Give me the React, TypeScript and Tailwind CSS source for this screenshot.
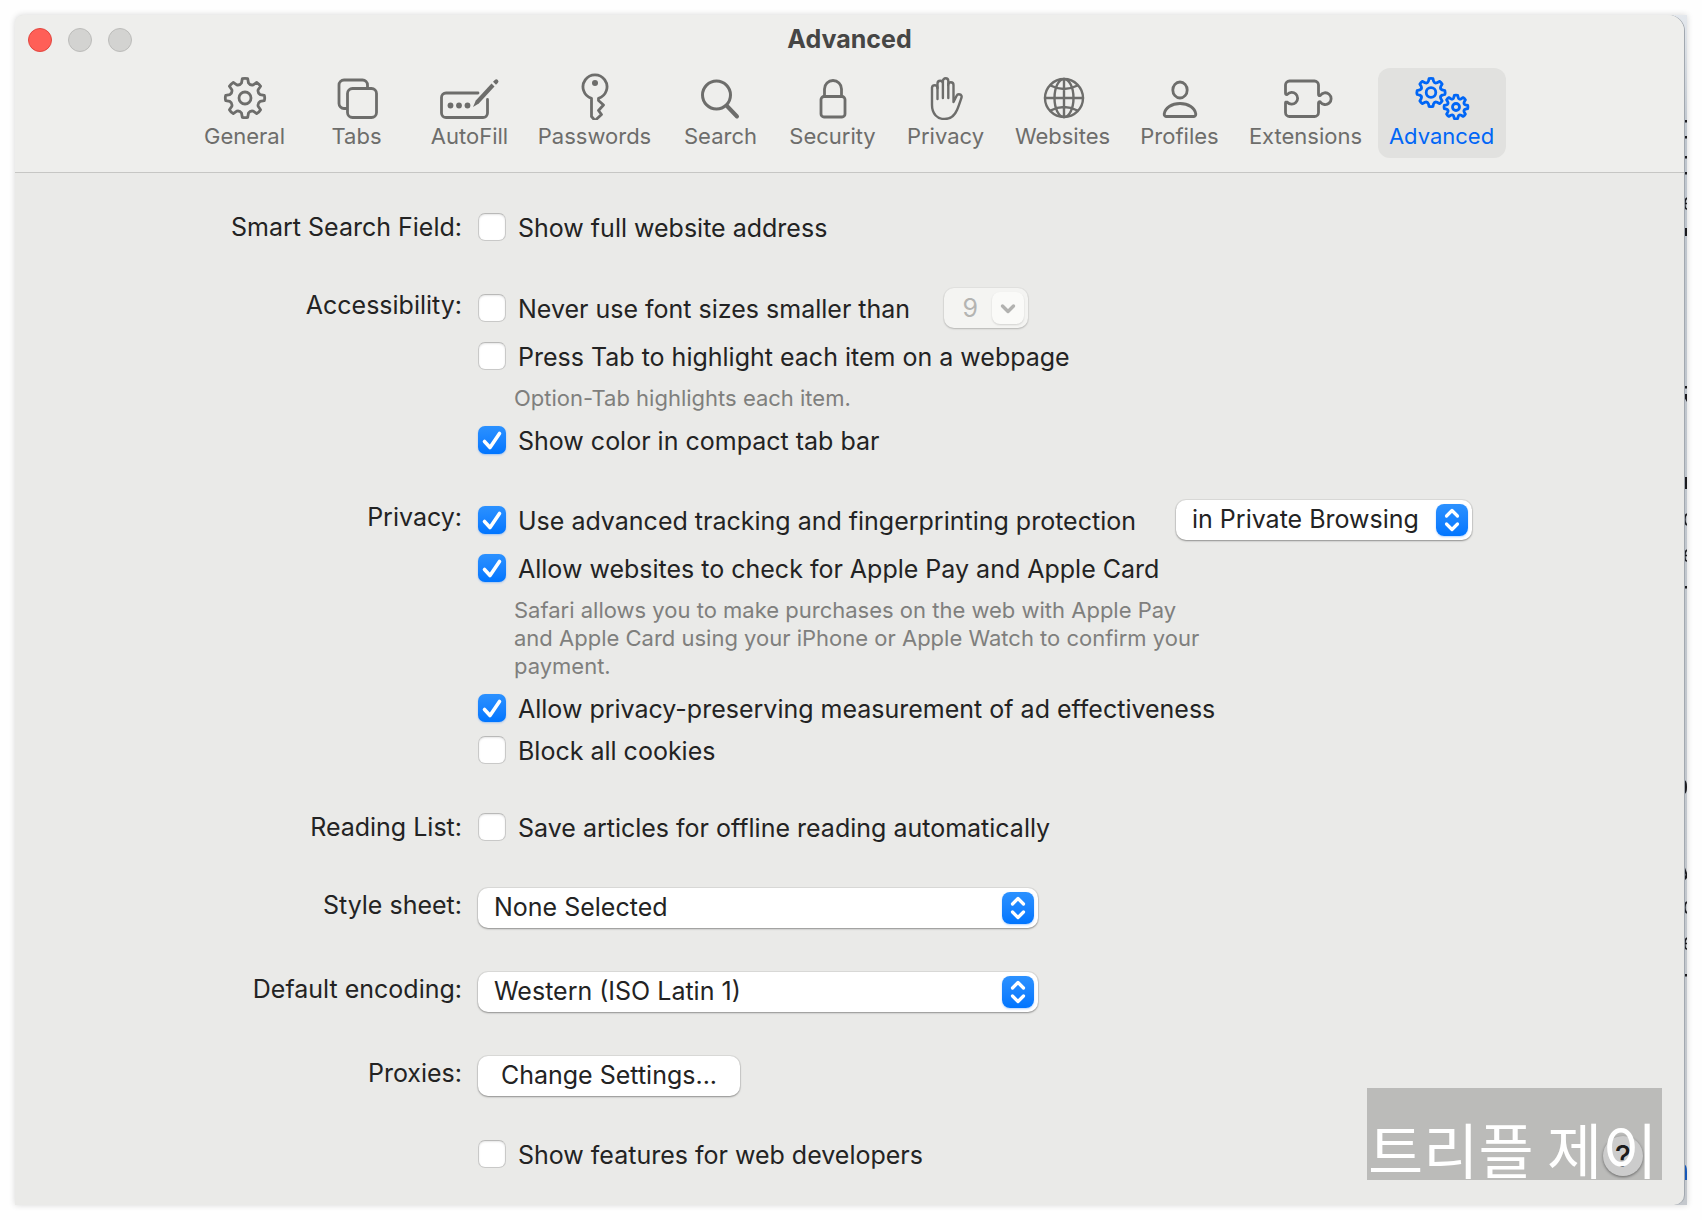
import React from "react";

type IconProps = { children: React.ReactNode; w?: number; h?: number };

function Icon({ children, w = 56, h = 52 }: IconProps) {
  return (
    <svg
      width={w}
      height={h}
      viewBox={`0 0 ${w} ${h}`}
      fill="none"
      stroke="currentColor"
      strokeWidth={2.8}
      strokeLinecap="round"
      strokeLinejoin="round"
      aria-hidden="true"
    >
      {children}
    </svg>
  );
}

/* Outline of an eight-toothed gear centred on (cx, cy). */
function gearPath(cx: number, cy: number, outer: number, inner: number) {
  const points: string[] = [];
  const at = (deg: number, r: number) => {
    const a = ((deg - 90) * Math.PI) / 180;
    return `${(cx + r * Math.cos(a)).toFixed(2)} ${(cy + r * Math.sin(a)).toFixed(2)}`;
  };
  for (let i = 0; i < 8; i++) {
    const d = i * 45;
    points.push(`${i === 0 ? "M" : "L"}${at(d - 8, outer)}`);
    points.push(`Q${at(d, outer * 1.03)} ${at(d + 8, outer)}`);
    points.push(`L${at(d + 13, inner + 1)}`);
    points.push(`Q${at(d + 22.5, inner - 1)} ${at(d + 32, inner + 1)}`);
  }
  return points.join(" ") + "Z";
}

const icons = {
  general: (
    <Icon>
      <path d={gearPath(28, 30, 19.5, 14.5)} />
      <circle cx="28" cy="30" r="6" />
    </Icon>
  ),
  tabs: (
    <Icon>
      <path d="M17.500 40.500h-2.500a5 5 0 0 1-5-5V17a5 5 0 0 1 5-5h18.500a5 5 0 0 1 5 5v2.500" />
      <rect x="18.500" y="20.500" width="29" height="29" rx="5" />
    </Icon>
  ),
  autofill: (
    <Icon w={62}>
      <path d="M39 25H7a4.500 4.500 0 0 0-4.500 4.500v15.500a4.500 4.500 0 0 0 4.500 4.500h37a4.500 4.500 0 0 0 4.500-4.500V31.500" />
      <g fill="currentColor" stroke="none">
        <circle cx="11.500" cy="37.500" r="2.900" />
        <circle cx="20" cy="37.500" r="2.900" />
        <circle cx="28.500" cy="37.500" r="2.900" />
        <path d="M34 39l2.800-6.500 15.700-17 3 3-15.700 17z" />
        <path d="M54 13.800l1.800-1.800a2.100 2.100 0 0 1 3 3l-1.800 1.800z" />
      </g>
    </Icon>
  ),
  passwords: (
    <Icon>
      <path d="M24.500 30.300A12 12 0 1 1 31.500 30.300V32.500l5 4.500-5 5.500 3 4-6.500 6-3.500-4z" />
      <circle cx="28" cy="15" r="3" fill="currentColor" stroke="none" />
    </Icon>
  ),
  search: (
    <Icon>
      <circle cx="23.500" cy="27" r="14" strokeWidth={3} />
      <path d="M34 38l10 10.500" strokeWidth={4} />
    </Icon>
  ),
  security: (
    <Icon>
      <rect x="16" y="28.500" width="24" height="20.500" rx="3" />
      <path d="M19.500 28.500v-7.500a8.500 8.500 0 0 1 17 0v7.500" />
    </Icon>
  ),
  privacy: (
    <Icon>
      <g strokeWidth={2.4}>
        <path d="M19.500 31V19.500a2.800 2.800 0 0 0-5.500 0V37c0 8.500 5 14 12.500 14 6.500 0 10-3 12.500-9 1.700-4 3-8 4.500-12.500 1-3-3.500-4.500-5-1.500L35.500 34V17a2.700 2.700 0 0 0-5.400 0" />
        <path d="M19.500 20v-4.500a2.700 2.700 0 0 1 5.400 0V30M24.900 15v-2a2.700 2.700 0 0 1 5.400 0v17" />
      </g>
    </Icon>
  ),
  websites: (
    <Icon>
      <g strokeWidth={2.4}>
        <circle cx="29" cy="30" r="19" />
        <ellipse cx="29" cy="30" rx="9.500" ry="19" />
        <path d="M10 30h38M29 11v38M15.500 17.500q13.500 7 27 0M15.500 42.500q13.500-7 27 0" />
      </g>
    </Icon>
  ),
  profiles: (
    <Icon>
      <ellipse cx="28" cy="22" rx="7.200" ry="8" />
      <path d="M14.500 48.500h27a2.300 2.300 0 0 0 2.300-2.500C43 40 36.500 35.500 28 35.500S13 40 12.200 46A2.300 2.300 0 0 0 14.500 48.500z" />
    </Icon>
  ),
  extensions: (
    <Icon>
      <path d="M7.500 25V17a4 4 0 0 1 4-4h25a4 4 0 0 1 4 4v9.200q0 2 1.800 1.200a5.900 5.900 0 1 1 0 6.500q-1.800-.8-1.800 1.200v9.400a4 4 0 0 1-4 4h-25a4 4 0 0 1-4-4v-9.400q0-1.500 1.800-.9a5.900 5.900 0 1 0 0-7.800q-1.800.600-1.800-1.400z" />
    </Icon>
  ),
  advanced: (
    <Icon>
      <path d={gearPath(17, 24.5, 14, 10.5)} />
      <circle cx="17" cy="24.500" r="4.800" />
      <path d={gearPath(42, 39, 11.8, 8.8)} />
      <circle cx="42" cy="39" r="3.500" />
    </Icon>
  ),
};

const tabs = [
  { label: "General", icon: icons.general, width: "w-[102px]" },
  { label: "Tabs", icon: icons.tabs, width: "w-[114px]" },
  { label: "AutoFill", icon: icons.autofill, width: "w-[104px]" },
  { label: "Passwords", icon: icons.passwords, width: "w-[138px]" },
  { label: "Search", icon: icons.search, width: "w-[106px]" },
  { label: "Security", icon: icons.security, width: "w-[110px]" },
  { label: "Privacy", icon: icons.privacy, width: "w-[108px]" },
  { label: "Websites", icon: icons.websites, width: "w-[118px]" },
  { label: "Profiles", icon: icons.profiles, width: "w-[108px]" },
  { label: "Extensions", icon: icons.extensions, width: "w-[136px]" },
  { label: "Advanced", icon: icons.advanced, width: "w-[128px]", active: true },
];

function Check({ label, checked = false, width = "" }: { label: string; checked?: boolean; width?: string }) {
  return (
    <label className={`flex h-7 items-center gap-3 whitespace-nowrap ${width}`}>
      <span className="relative block size-7 shrink-0">
        <input
          type="checkbox"
          defaultChecked={checked}
          className="peer block size-7 appearance-none rounded-[7px] border border-[#c9c9c8] border-t-[#b9b9b8] bg-white shadow-[inset_0_1px_2px_rgba(0,0,0,0.1)] checked:border-0 checked:bg-linear-to-b checked:from-[#2b91ff] checked:to-[#0075ff] checked:shadow-[0_1px_2px_rgba(0,110,255,0.3)]"
        />
        <svg
          viewBox="0 0 28 28"
          className="pointer-events-none absolute inset-0 hidden size-7 peer-checked:block"
          fill="none"
          stroke="white"
          strokeWidth={3.6}
          strokeLinecap="round"
          strokeLinejoin="round"
          aria-hidden="true"
        >
          <path d="M6.500 15.500l5.500 6L21.500 7.500" />
        </svg>
      </span>
      <span className="pt-[2px] leading-[28px]">{label}</span>
    </label>
  );
}

function PopUp({ id, label, value, width }: { id?: string; label?: string; value: string; width: string }) {
  return (
    <div className={`relative h-10 shrink-0 ${width}`}>
      <select
        id={id}
        aria-label={label}
        className="block h-10 w-full appearance-none rounded-[10px] bg-white pr-10 pl-4 shadow-[0_0_0_1px_rgba(0,0,0,0.06),0_1px_2px_rgba(0,0,0,0.35)]"
      >
        <option>{value}</option>
      </select>
      <span className="pointer-events-none absolute top-1 right-1 size-8 rounded-lg bg-linear-to-b from-[#2b91ff] to-[#0075ff] shadow-[0_1px_2px_rgba(0,110,255,0.3)]">
        <svg
          viewBox="0 0 32 32"
          fill="none"
          stroke="white"
          strokeWidth={3.2}
          strokeLinecap="round"
          strokeLinejoin="round"
          aria-hidden="true"
        >
          <path d="M10.500 12L16 6.500l5.500 5.500M10.500 20l5.500 5.500 5.500-5.500" />
        </svg>
      </span>
    </div>
  );
}

function Hint({ children }: { children: React.ReactNode }) {
  return <p className="max-w-[732px] pl-9 text-[22px] leading-[28px] text-[#7f7f7d]">{children}</p>;
}

type RowProps = { label?: string; htmlFor?: string; className?: string; children: React.ReactNode };

function Row({ label, htmlFor, className = "", children }: RowProps) {
  return (
    <div className={`grid grid-cols-[447px_1fr] gap-x-4 ${className}`}>
      <div className="text-right leading-[34px]">{htmlFor ? <label htmlFor={htmlFor}>{label}</label> : label}</div>
      <div className="flex flex-col gap-[14px]">{children}</div>
    </div>
  );
}

/* Text of the page behind the window, seen as slivers past its right edge. */
function Backdrop() {
  return (
    <svg
      className="absolute top-0 right-0 h-full w-[3px]"
      width="3"
      height="1190"
      viewBox="0 0 3 1190"
      preserveAspectRatio="xMidYMin slice"
      aria-hidden="true"
    >
      <g fill="#1b1b1f">
        {[105, 121, 141, 157, 371, 571, 959].map((y) => (
          <rect key={y} x="0" y={y} width="3" height="2.500" />
        ))}
        <rect x="1" y="213" width="2" height="8" />
        <path d="M0 379h3v8l-3-5z" />
        <rect x="1" y="462" width="2" height="12" />
        <path d="M0 765q3 0 3 7t-3 7v-3q1-1 1-4t-1-4z" />
        <path d="M0 850l3 8v5l-3 3v-3l1.500-3L0 854z" />
      </g>
      <g fill="none" stroke="#1b1b1f" strokeWidth="1.600">
        <path d="M3 183q-2.200 1-2.200 6t2.200 5M1 188.500h2" />
        <path d="M3 499q-2.200 1-2.200 5.500t2.200 5.500" />
        <path d="M3 535q-2.200 1-2.200 6t2.200 5M1 540.500h2" />
        <path d="M3 887q-2.200 1-2.200 5.500t2.200 5.500" />
        <path d="M3 923q-2.200 1-2.200 6t2.200 5M1 928.500h2" />
      </g>
      <path d="M0 1149q3 1 3 8v8H0z" fill="#1557b8" />
    </svg>
  );
}

export default function App() {
  return (
    <div className="flex min-h-screen flex-col bg-[#fefefe] pt-[15px] pr-[15px] pb-[15px] pl-[15px] font-[Inter,'Liberation_Sans',sans-serif] text-[25px] text-[#232323]">
      <div className="relative flex grow flex-col rounded-tl-[8px] bg-linear-to-b from-[#e4e8ed] via-[#bfc6ce] via-10% to-[#c4c8cd] pr-[3px] shadow-[0_0_6px_rgba(0,0,0,0.16)]">
        <Backdrop />
        <main className="relative grow rounded-tl-[8px] rounded-tr-[16px] rounded-br-[10px] bg-[#eaeae8] shadow-[1px_0_0_#a2a8af]">
          <header className="rounded-tl-[8px] rounded-tr-[16px] border-b border-[#c6c6c4] bg-[#eeeeec] pb-[14px]">
            <div className="grid h-[53px] grid-cols-[1fr_auto_1fr] px-[13px]">
              <div className="flex items-center gap-4 pb-[3px]">
                <button type="button" aria-label="Close" className="size-6 rounded-full border border-[#e2463f] bg-[#ff5f57]" />
                <button type="button" aria-label="Minimize" className="size-6 rounded-full border border-[#bcbcba] bg-[#d3d3d1]" />
                <button type="button" aria-label="Zoom" className="size-6 rounded-full border border-[#bcbcba] bg-[#d3d3d1]" />
              </div>
              <h1 className="pt-[6px] leading-[36px] font-bold text-[#464645]">Advanced</h1>
            </div>
            <nav className="flex justify-center gap-1 text-[22px] text-[#6d6d6b]">
              {tabs.map((tab) => (
                <button
                  type="button"
                  key={tab.label}
                  className={`flex h-[90px] flex-col items-center rounded-[12px] ${tab.width} ${tab.active ? "bg-[#e1e1df] text-[#0066f6]" : ""}`}
                >
                  {tab.icon}
                  <span className="leading-[32px]">{tab.label}</span>
                </button>
              ))}
            </nav>
          </header>

          <form className="flex flex-col gap-11 pt-[37px] pb-[37px]">
            <Row label="Smart Search Field:">
              <div className="flex h-[34px] items-center">
                <Check label="Show full website address" />
              </div>
            </Row>

            <Row label="Accessibility:">
              <div className="flex h-10 items-center">
                <Check label="Never use font sizes smaller than" width="w-[466px]" />
                <div className="flex h-10 w-[84px] items-center rounded-[10px] bg-[#f4f4f2] pr-1 shadow-[0_0_0_1px_rgba(0,0,0,0.03),0_1px_2px_rgba(0,0,0,0.2)]">
                  <input
                    type="text"
                    aria-label="Minimum font size"
                    defaultValue="9"
                    disabled
                    className="h-10 w-[44px] bg-transparent pr-[10px] text-right text-[#b4b4b2]"
                  />
                  <button
                    type="button"
                    aria-label="Choose font size"
                    disabled
                    className="ml-1 size-8 shrink-0 rounded-lg bg-[#fafaf8] shadow-[0_1px_2px_rgba(0,0,0,0.14)]"
                  >
                    <svg
                      viewBox="0 0 32 32"
                      fill="none"
                      stroke="#b2b2b0"
                      strokeWidth={3.4}
                      strokeLinecap="round"
                      strokeLinejoin="round"
                      aria-hidden="true"
                    >
                      <path d="M10.500 14l5.500 5.500 5.500-5.500" />
                    </svg>
                  </button>
                </div>
              </div>
              <Check label="Press Tab to highlight each item on a webpage" />
              <Hint>Option-Tab highlights each item.</Hint>
              <Check label="Show color in compact tab bar" checked />
            </Row>

            <Row label="Privacy:" className="mt-0.5">
              <div className="flex h-10 items-center">
                <Check label="Use advanced tracking and fingerprinting protection" checked width="w-[698px]" />
                <PopUp label="Tracking protection scope" value="in Private Browsing" width="w-[296px]" />
              </div>
              <Check label="Allow websites to check for Apple Pay and Apple Card" checked />
              <Hint>
                Safari allows you to make purchases on the web with Apple Pay and Apple Card using your iPhone or Apple
                Watch to confirm your payment.
              </Hint>
              <Check label="Allow privacy-preserving measurement of ad effectiveness" checked />
              <Check label="Block all cookies" />
            </Row>

            <Row label="Reading List:" className="mt-0.5">
              <div className="flex h-[34px] items-center">
                <Check label="Save articles for offline reading automatically" />
              </div>
            </Row>

            <Row label="Style sheet:" htmlFor="style-sheet">
              <PopUp id="style-sheet" value="None Selected" width="w-[560px]" />
            </Row>

            <Row label="Default encoding:" htmlFor="encoding">
              <PopUp id="encoding" value="Western (ISO Latin 1)" width="w-[560px]" />
            </Row>

            <Row label="Proxies:">
              <button
                type="button"
                className="h-10 w-[262px] rounded-[10px] bg-white shadow-[0_0_0_1px_rgba(0,0,0,0.06),0_1px_2px_rgba(0,0,0,0.35)]"
              >
                Change Settings...
              </button>
            </Row>

            <Row>
              <Check label="Show features for web developers" />
            </Row>
          </form>

          <button
            type="button"
            aria-label="Help"
            className="absolute right-[41px] bottom-[29px] size-10 rounded-full bg-white text-[30px] leading-[40px] font-medium shadow-[0_1px_3px_rgba(0,0,0,0.45)]"
          >
            ?
          </button>
          <div className="pointer-events-none absolute right-[22px] bottom-[25px] flex h-[92px] w-[295px] items-end bg-black/20 pl-[1px] font-['Noto_Sans_CJK_KR',sans-serif] text-[60px] leading-[64px] font-normal whitespace-nowrap text-white">
            트리플 제이
          </div>
        </main>
      </div>
    </div>
  );
}
